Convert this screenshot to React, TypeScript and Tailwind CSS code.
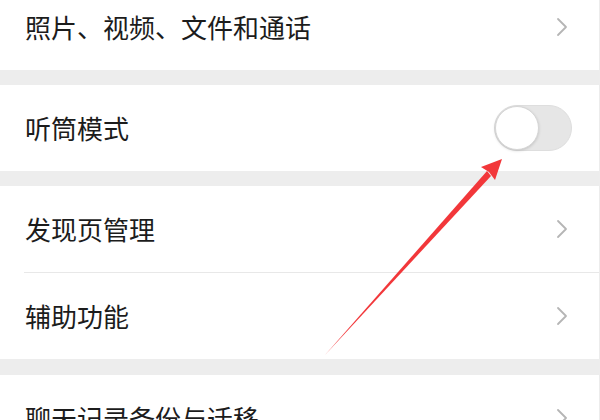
import React from "react";

const font = {
  fontFamily: '"Noto Sans CJK SC", "Noto Sans", sans-serif',
};

const Chevron = () => (
  <svg width="14" height="20" viewBox="0 0 14 20" fill="none">
    <path
      d="M3 2 L11 10 L3 18"
      stroke="#b5b5b5"
      strokeWidth="1.8"
      strokeLinecap="round"
      strokeLinejoin="round"
    />
  </svg>
);

const Toggle = () => (
  <div className="w-[78px] h-[46px] rounded-full bg-[#e6e6e6] border border-[#dedede] relative">
    <div className="absolute left-0 top-0 w-[44px] h-[44px] rounded-full bg-white border border-[#d6d6d6] shadow-[0_1px_3px_rgba(0,0,0,0.15)]" />
  </div>
);

const Row = ({
  label,
  right,
  divider,
  className = "",
}: {
  label: string;
  right: React.ReactNode;
  divider?: boolean;
  className?: string;
}) => (
  <div className={`bg-white flex flex-col border-r border-[#ececec] ${className}`}>
    <div className="flex items-center justify-between h-[86px] pl-[25px] pr-[30px]">
      <span className="text-[26px] text-[#1c1c1c] leading-none" style={font}>
        {label}
      </span>
      {right}
    </div>
    {divider && <div className="ml-[24px] h-px bg-[#e8e8e8]" />}
  </div>
);

const Arrow = () => (
  <svg
    className="absolute left-0 top-0 pointer-events-none"
    width="600"
    height="420"
    viewBox="0 0 600 420"
  >
    {/* tapered shaft */}
    <polygon points="325,355 487,171 491,176" fill="#f2373a" />
    {/* head */}
    <polygon points="502,159 481,167 489,172 495,180" fill="#f2373a" />
  </svg>
);

export default function App() {
  return (
    <div className="relative w-[600px] h-[420px] overflow-hidden bg-[#ededed]">
      <div className="flex flex-col mt-[-16px]">
        <Row label="照片、视频、文件和通话" right={<Chevron />} />
        <div className="h-[15px]" />
        <Row
          label="听筒模式"
          right={
            <div className="mr-[-3px]">
              <Toggle />
            </div>
          }
        />
        <div className="h-[15px]" />
        <Row label="发现页管理" right={<Chevron />} divider />
        <Row label="辅助功能" right={<Chevron />} />
        <div className="h-[16px]" />
        <Row label="聊天记录备份与迁移" right={<Chevron />} />
      </div>
      <Arrow />
    </div>
  );
}
